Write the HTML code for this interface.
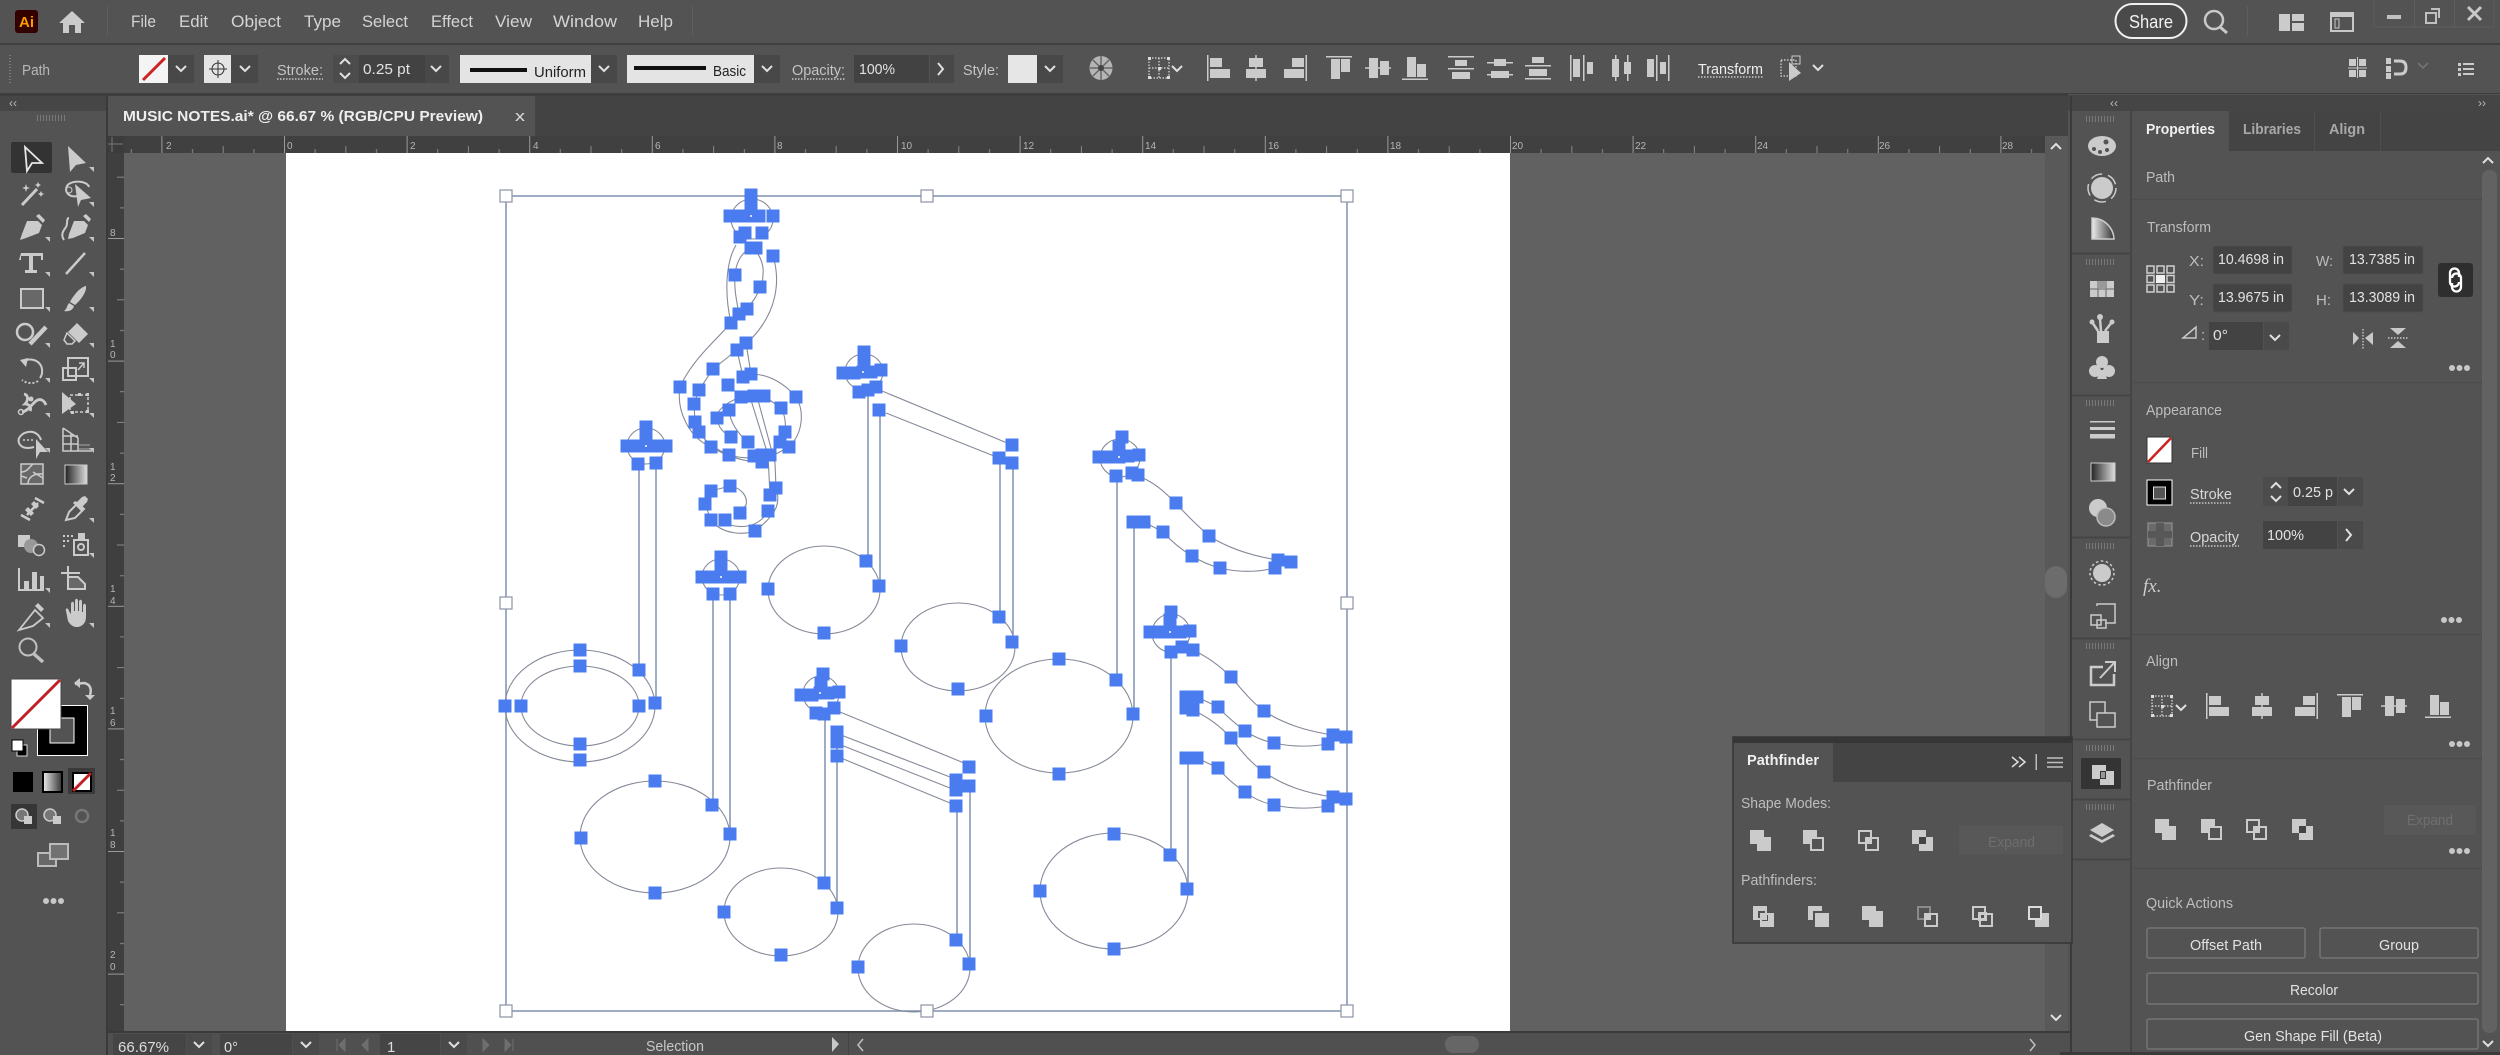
<!DOCTYPE html>
<html><head><meta charset="utf-8"><title>Illustrator</title>
<style>
html,body{margin:0;padding:0;background:#535353;width:2500px;height:1055px;overflow:hidden}
svg{display:block}
text{font-family:"Liberation Sans",sans-serif;fill:#d0d0d0}
.m{font-size:17px;fill:#d4d4d4}
.o{font-size:15px;fill:#c4c4c4}
.v{font-size:15px;fill:#e2e2e2}
.h{font-size:15px;fill:#bdbdbd}
.r{font-size:10px;fill:#b5b5b5}
.b{font-weight:bold}
.ln{fill:none;stroke:#7f90b0;stroke-width:1.5}
.lt{fill:none;stroke:#858a99;stroke-width:1.1}
.hd{fill:none;stroke:#4a7cf0;stroke-width:13;stroke-linecap:square}
.ic{fill:#cbcbcb}
.st{fill:none;stroke:#cbcbcb;stroke-width:2}
.chev{fill:none;stroke:#e0e0e0;stroke-width:2}
.dot{fill:none;stroke:#ddd;stroke-width:1.2;stroke-dasharray:1.5 1.5}
</style></head><body>
<svg xmlns="http://www.w3.org/2000/svg" width="2500" height="1055" viewBox="0 0 2500 1055">
<defs>
<linearGradient id="gr" x1="0" x2="1" y1="0" y2="0"><stop offset="0" stop-color="#222"/><stop offset="1" stop-color="#ddd"/></linearGradient>
<linearGradient id="gr2" x1="0" x2="1" y1="0" y2="0"><stop offset="0" stop-color="#eee"/><stop offset="1" stop-color="#333"/></linearGradient>
<pattern id="rh" width="122.6" height="17" patternUnits="userSpaceOnUse" patternTransform="translate(284 136)">
<rect x="0" y="0" width="1" height="17" fill="#999"/><rect x="30.6" y="13" width="1" height="4" fill="#888"/><rect x="61.3" y="10" width="1" height="7" fill="#888"/><rect x="92" y="13" width="1" height="4" fill="#888"/></pattern>
<pattern id="rv" width="17" height="122.6" patternUnits="userSpaceOnUse" patternTransform="translate(107 238)">
<rect x="0" y="0" width="17" height="1" fill="#999"/><rect x="13" y="30.6" width="4" height="1" fill="#888"/><rect x="10" y="61.3" width="7" height="1" fill="#888"/><rect x="13" y="92" width="4" height="1" fill="#888"/></pattern>
<path id="ch" class="chev" d="M-5 -3L0 2L5 -3"/>
<path id="chu" class="chev" d="M-5 2L0 -3L5 2"/>
<path id="tri" fill="#c4c4c4" d="M0 0V-5H-5z"/>
<g id="a1" class="ic"><rect x="-11" y="-13" width="1.5" height="26"/><rect x="-8" y="-10" width="12" height="9"/><rect x="-8" y="1" width="20" height="9"/></g>
<g id="a2" class="ic"><rect x="-.75" y="-13" width="1.5" height="26"/><rect x="-7" y="-10" width="14" height="9"/><rect x="-10" y="1" width="20" height="9"/></g>
<g id="a4" class="ic"><rect x="-13" y="-12" width="26" height="1.5"/><rect x="-8" y="-9" width="9" height="20"/><rect x="2" y="-9" width="9" height="13"/></g>
<g id="a5" class="ic"><rect x="-13" y="-.75" width="26" height="1.5"/><rect x="-9" y="-10" width="9" height="20"/><rect x="2" y="-7" width="9" height="14"/></g>
<g id="a7" class="ic"><rect x="-13" y="-12" width="26" height="1.5"/><rect x="-6" y="-8" width="12" height="6"/><rect x="-13" y="0" width="26" height="1.5"/><rect x="-9" y="4" width="18" height="7"/></g>
<g id="a8" class="ic"><rect x="-6" y="-9" width="12" height="7"/><rect x="-13" y="-6" width="26" height="1.5"/><rect x="-9" y="3" width="18" height="7"/><rect x="-13" y="6" width="26" height="1.5"/></g>
<g id="a9" class="ic"><rect x="-6" y="-11" width="12" height="6"/><rect x="-13" y="-3" width="26" height="1.5"/><rect x="-9" y="1" width="18" height="7"/><rect x="-13" y="10" width="26" height="1.5"/></g>
<g id="a10" class="ic"><rect x="-12" y="-13" width="1.5" height="26"/><rect x="-9" y="-9" width="7" height="18"/><rect x="1" y="-13" width="1.5" height="26"/><rect x="5" y="-6" width="6" height="12"/></g>
<g id="a11" class="ic"><rect x="-9" y="-9" width="7" height="18"/><rect x="-6" y="-13" width="1.5" height="26"/><rect x="3" y="-6" width="7" height="12"/><rect x="6" y="-13" width="1.5" height="26"/></g>
<g id="a12" class="ic"><rect x="-9" y="-9" width="7" height="18"/><rect x="0" y="-13" width="1.5" height="26"/><rect x="4" y="-6" width="6" height="12"/><rect x="12" y="-13" width="1.5" height="26"/></g>
<g id="p1" class="ic"><path d="M0 0h14v7h7v14h-14v-7h-7z"/></g>
<g id="p2"><rect class="ic" width="14" height="14"/><rect x="8" y="8" width="12" height="12" fill="#535353" stroke="#cbcbcb" stroke-width="2"/></g>
<g id="p3"><rect class="ic" x="7" y="7" width="7" height="7"/><rect class="st" x="1" y="1" width="12" height="12"/><rect class="st" x="8" y="8" width="12" height="12"/></g>
<g id="p4"><path class="ic" d="M0 0h14v7h7v14h-14v-7h-7z"/><rect x="7" y="7" width="7" height="7" fill="#444"/></g>
<g id="p5"><rect class="st" x="1" y="1" width="12" height="12"/><rect class="ic" x="0" y="0" width="14" height="5"/><rect class="ic" x="0" y="0" width="5" height="14"/><rect class="ic" x="7" y="7" width="7" height="7"/><rect class="st" x="8" y="8" width="12" height="12"/><rect class="ic" x="15" y="7" width="6" height="14"/><rect class="ic" x="7" y="15" width="14" height="6"/></g>
<g id="p6"><path class="ic" d="M0 0h14v5h-9v9h-5z"/><rect class="ic" x="7" y="7" width="14" height="14"/></g>
<g id="p7"><path class="ic" d="M0 0h14v5h7v16h-14v-7h-7z"/></g>
<g id="p8"><rect fill="none" stroke="#8a8a8a" stroke-width="2" x="1" y="1" width="12" height="12"/><rect class="st" x="8" y="8" width="12" height="12"/><rect class="ic" x="7" y="7" width="7" height="7"/></g>
<g id="p9"><rect class="st" x="1" y="1" width="12" height="12"/><rect class="st" x="8" y="8" width="12" height="12"/><rect class="st" x="7" y="7" width="7" height="7"/></g>
<g id="p10"><path class="ic" d="M14 7h7v14h-14v-7h7z"/><rect fill="none" stroke="#dcdcdc" stroke-width="2" x="1" y="1" width="12" height="12"/></g>
<g id="dots" fill="#c8c8c8"><circle cx="0" cy="0" r="3"/><circle cx="7.5" cy="0" r="3"/><circle cx="15" cy="0" r="3"/></g>
<g id="grip" fill="#7a7a7a"><rect x="0" y="0" width="1" height="6"/><rect x="3" y="0" width="1" height="6"/><rect x="6" y="0" width="1" height="6"/><rect x="9" y="0" width="1" height="6"/><rect x="12" y="0" width="1" height="6"/><rect x="15" y="0" width="1" height="6"/><rect x="18" y="0" width="1" height="6"/><rect x="21" y="0" width="1" height="6"/><rect x="24" y="0" width="1" height="6"/><rect x="27" y="0" width="1" height="6"/></g>
<g id="none"><rect width="25" height="26" fill="#fff" stroke="#333"/><path d="M1 25L24 1" stroke="#c22" stroke-width="2.5"/></g>
<g id="dash"><rect class="dot" x="0" y="0" width="20" height="20"/><path d="M10 0v20M0 10h20" class="dot"/><g fill="#ddd"><rect x="-1" y="-1" width="3" height="3"/><rect x="18" y="-1" width="3" height="3"/><rect x="-1" y="18" width="3" height="3"/><rect x="18" y="18" width="3" height="3"/><rect x="9" y="9" width="3" height="3"/></g></g>
</defs>

<!-- base -->
<rect width="2500" height="1055" fill="#535353"/>
<!-- canvas -->
<rect x="107" y="94" width="1965" height="940" fill="#616161"/>
<rect x="0" y="43" width="2500" height="2" fill="#3f3f3f"/>
<rect x="0" y="93" width="2500" height="3" fill="#3d3d3d"/>

<!-- tabs row -->
<rect x="107" y="96" width="1965" height="40" fill="#434343"/>
<rect x="108" y="96" width="427" height="40" fill="#535353"/>
<text class="b" x="123" y="121" font-size="15" textLength="360" lengthAdjust="spacingAndGlyphs" style="fill:#eee">MUSIC NOTES.ai* @ 66.67 % (RGB/CPU Preview)</text>
<text x="515" y="121" font-size="15" textLength="10" lengthAdjust="spacingAndGlyphs" style="fill:#ddd">x</text>

<!-- rulers -->
<rect x="107" y="136" width="1938" height="17" fill="#404040"/>
<rect x="107" y="136" width="1938" height="17" fill="url(#rh)"/>
<rect x="107" y="153" width="17" height="878" fill="#3f3f3f"/>
<rect x="107" y="153" width="17" height="878" fill="url(#rv)"/>
<rect x="107" y="136" width="17" height="17" fill="#3c3c3c"/>
<path d="M112 137v15M108 144h15" stroke="#777" fill="none"/>
<g class="r">
<text class="r" x="166" y="149">2</text><text class="r" x="287" y="149">0</text><text class="r" x="410" y="149">2</text><text class="r" x="533" y="149">4</text><text class="r" x="655" y="149">6</text><text class="r" x="777" y="149">8</text><text class="r" x="901" y="149">10</text><text class="r" x="1023" y="149">12</text><text class="r" x="1145" y="149">14</text><text class="r" x="1268" y="149">16</text><text class="r" x="1390" y="149">18</text><text class="r" x="1512" y="149">20</text><text class="r" x="1635" y="149">22</text><text class="r" x="1757" y="149">24</text><text class="r" x="1879" y="149">26</text><text class="r" x="2002" y="149">28</text>
<text class="r" x="110" y="236">8</text>
<text class="r" x="110" y="347">1</text><text class="r" x="110" y="358">0</text>
<text class="r" x="110" y="470">1</text><text class="r" x="110" y="481">2</text>
<text class="r" x="110" y="592">1</text><text class="r" x="110" y="604">4</text>
<text class="r" x="110" y="714">1</text><text class="r" x="110" y="726">6</text>
<text class="r" x="110" y="836">1</text><text class="r" x="110" y="848">8</text>
<text class="r" x="110" y="958">2</text><text class="r" x="110" y="970">0</text>
</g>

<!-- artboard -->
<rect x="286" y="153" width="1224" height="878" fill="#fff"/>

<!-- ARTWORK: bounding box lines -->
<rect class="ln" x="506" y="196" width="841" height="815"/>
<!-- curves -->
<g class="lt">
<!-- clef -->
<ellipse cx="752" cy="219" rx="21" ry="20"/>
<path d="M736 245C726 262 724 292 731 323C716 340 692 360 680 387C676 412 690 438 711 447C728 457 745 462 762 462"/>
<path d="M773 256C781 282 776 312 753 337L746 343"/>
<path d="M751 248C742 252 736 262 735 275C734 288 736 298 739 314M751 248C760 252 764 266 763 274C763 280 762 284 760 287C757 297 752 302 747 309"/>
<path d="M737 350L713 369L699 390L694 404L695 422L699 432C708 445 718 450 729 455C738 458 748 458 754 458"/>
<path d="M751 374C770 374 786 385 796 397C804 410 804 432 789 447L772 456"/>
<path d="M741 397C724 403 716 412 717 418C718 428 724 433 731 437M729 410C730 422 738 434 748 442M764 396L781 408C785 415 786 424 785 432"/>
<path d="M746 343L751 374M737 350L743 377M751 400L768 455L770 495M758 400L775 463L776 488"/>
<path d="M776 488C780 500 780 512 755 531C745 535 722 535 711 520M768 511C762 522 750 530 730 525L725 520M730 486C742 488 748 497 746 505L740 513M711 491L730 486M711 491L705 504L711 520"/>
<!-- note A -->
<ellipse cx="646" cy="446" rx="19" ry="18"/>
<ellipse cx="580" cy="706" rx="75" ry="56"/><ellipse cx="580" cy="706" rx="59" ry="40"/>
<!-- note B -->
<ellipse cx="721" cy="577" rx="19" ry="18"/>
<ellipse cx="655" cy="837" rx="75" ry="56"/>
<!-- note C -->
<ellipse cx="864" cy="372" rx="19" ry="18"/>
<ellipse cx="824" cy="590" rx="56" ry="44"/>
<ellipse cx="958" cy="647" rx="57" ry="44"/>
<path d="M882 391L1012 445M886 413L999 458"/>
<!-- note D -->
<ellipse cx="1120" cy="458" rx="20" ry="19"/>
<path d="M1143 478C1158 485 1166 494 1176 503C1186 515 1198 526 1209 536C1228 548 1252 556 1278 560M1144 522L1163 532C1172 542 1182 550 1192 556C1202 562 1212 566 1220 568C1240 573 1258 572 1275 568"/>
<ellipse cx="1059" cy="716" rx="74" ry="57"/>
<!-- note E -->
<ellipse cx="1171" cy="633" rx="19" ry="19"/>
<path d="M1193 650C1210 658 1222 668 1231 677C1242 690 1252 702 1264 711C1284 724 1306 731 1333 735M1197 697L1218 707C1226 716 1236 724 1245 731C1254 737 1264 741 1274 743C1292 747 1310 747 1328 744"/>
<path d="M1193 710C1210 718 1222 728 1231 738C1242 752 1252 764 1264 772C1284 786 1306 793 1333 797M1197 758L1218 768C1226 778 1236 786 1245 792C1254 799 1264 803 1274 805C1292 809 1310 809 1328 806"/>
<ellipse cx="1114" cy="891" rx="74" ry="58"/>
<!-- note F -->
<ellipse cx="821" cy="694" rx="18" ry="18"/>
<path d="M840 712L964 763M841 735L950 777M841 745L950 788M841 758L950 803"/>
<ellipse cx="781" cy="912" rx="57" ry="44"/>
<ellipse cx="914" cy="968" rx="56" ry="44"/>
</g>
<!-- stems -->
<path class="ln" d="M639 464V670M656 463V703M713 594V805M730 594V834M868 392V561M880 410V586M1000 458V617M1013 460V642M1117 476V680M1134 522V714M1171 652V855M1188 758V889M825 712V883M837 726V908M957 806V940M970 786V964"/>

<!-- anchor points -->
<path class="hd" d="M751 195h0M751 204h0M751 216h0M730 216h0M743 216h0M759 216h0M773 216h0M762 233h0M745 233h0M740 237h0M751 248h0M756 248h0M773 256h0M735 275h0M760 287h0M747 309h0M739 314h0M731 323h0M746 343h0M737 350h0M713 369h0M680 387h0M699 390h0M728 385h0M743 377h0M751 374h0M796 397h0M741 397h0M754 396h0M764 396h0M781 408h0M694 404h0M729 410h0M717 418h0M695 422h0M699 432h0M731 437h0M748 442h0M785 432h0M780 442h0M789 447h0M711 447h0M729 455h0M754 456h0M762 455h0M770 455h0M762 462h0M776 488h0M770 495h0M768 511h0M711 491h0M730 486h0M705 504h0M740 513h0M711 520h0M725 520h0M755 531h0"/>
<path class="hd" d="M646 427h0M646 437h0M646 446h0M627 446h0M637 446h0M655 446h0M666 446h0M638 464h0M656 463h0M580 650h0M580 666h0M580 744h0M580 760h0M505 706h0M521 706h0M639 706h0M655 703h0M639 670h0"/>
<path class="hd" d="M721 557h0M721 567h0M721 577h0M702 577h0M711 577h0M729 577h0M740 577h0M713 594h0M730 594h0M655 781h0M655 893h0M581 838h0M712 805h0M730 834h0"/>
<path class="hd" d="M864 352h0M864 362h0M863 372h0M843 373h0M854 373h0M871 372h0M881 370h0M859 392h0M868 390h0M876 387h0M879 410h0M866 561h0M879 586h0M768 589h0M824 633h0M1012 445h0M999 458h0M1012 463h0M999 617h0M1012 642h0M901 646h0M958 689h0"/>
<path class="hd" d="M1122 437h0M1119 447h0M1119 457h0M1099 457h0M1110 457h0M1128 456h0M1139 455h0M1116 476h0M1132 473h0M1138 475h0M1176 503h0M1209 536h0M1278 560h0M1291 562h0M1275 568h0M1133 522h0M1144 522h0M1163 532h0M1192 556h0M1220 568h0M1059 659h0M1116 680h0M986 716h0M1133 714h0M1059 774h0"/>
<path class="hd" d="M1171 612h0M1170 620h0M1170 632h0M1150 632h0M1160 632h0M1180 632h0M1190 631h0M1171 652h0M1182 647h0M1193 650h0M1231 677h0M1264 711h0M1333 735h0M1346 737h0M1328 744h0M1186 697h0M1197 697h0M1186 708h0M1193 710h0M1218 707h0M1245 731h0M1274 743h0M1231 738h0M1264 772h0M1333 797h0M1346 799h0M1328 806h0M1186 758h0M1197 758h0M1218 768h0M1245 792h0M1274 805h0M1114 834h0M1170 855h0M1040 891h0M1187 889h0M1114 949h0"/>
<path class="hd" d="M823 674h0M821 683h0M820 693h0M801 695h0M812 695h0M828 693h0M839 692h0M816 713h0M824 714h0M834 708h0M837 732h0M837 742h0M837 756h0M969 767h0M956 780h0M956 790h0M969 786h0M956 806h0M824 883h0M837 908h0M724 912h0M781 955h0M956 940h0M969 964h0M858 967h0"/>
<circle cx="751" cy="216" r="1" fill="#fff"/><circle cx="646" cy="446" r="1" fill="#fff"/><circle cx="721" cy="577" r="1" fill="#fff"/><circle cx="863" cy="372" r="1" fill="#fff"/><circle cx="1119" cy="457" r="1" fill="#fff"/><circle cx="1170" cy="632" r="1" fill="#fff"/><circle cx="820" cy="693" r="1" fill="#fff"/>
<!-- bbox handles -->
<g fill="#fff" stroke="#8a93a5" stroke-width="1.2">
<rect x="500" y="190" width="12" height="12"/><rect x="921" y="190" width="12" height="12"/><rect x="1341" y="190" width="12" height="12"/>
<rect x="500" y="597" width="12" height="12"/><rect x="1341" y="597" width="12" height="12"/>
<rect x="500" y="1005" width="12" height="12"/><rect x="921" y="1005" width="12" height="12"/><rect x="1341" y="1005" width="12" height="12"/>
</g>

<!-- canvas scrollbar right -->
<rect x="2045" y="136" width="27" height="896" fill="#595959"/>
<rect x="2045" y="566" width="22" height="32" rx="11" fill="#6c6c6c"/>
<use href="#chu" x="2056" y="147"/><use href="#ch" x="2056" y="1018"/>

<!-- MENU BAR -->
<rect x="15" y="10" width="23" height="23" rx="3" fill="#330000"/>
<text x="19" y="27" font-size="15" class="b" style="fill:#ff9a00">Ai</text>
<path class="ic" d="M72 11L85 23H81V33H75V25H69V33H63V23H59z"/>
<rect x="107" y="6" width="1" height="30" fill="#5e5e5e"/><rect x="692" y="6" width="1" height="30" fill="#5e5e5e"/>
<text class="m" x="131" y="27" textLength="25" lengthAdjust="spacingAndGlyphs">File</text>
<text class="m" x="179" y="27" textLength="29" lengthAdjust="spacingAndGlyphs">Edit</text>
<text class="m" x="231" y="27" textLength="50" lengthAdjust="spacingAndGlyphs">Object</text>
<text class="m" x="304" y="27" textLength="37" lengthAdjust="spacingAndGlyphs">Type</text>
<text class="m" x="362" y="27" textLength="46" lengthAdjust="spacingAndGlyphs">Select</text>
<text class="m" x="431" y="27" textLength="42" lengthAdjust="spacingAndGlyphs">Effect</text>
<text class="m" x="495" y="27" textLength="37" lengthAdjust="spacingAndGlyphs">View</text>
<text class="m" x="553" y="27" textLength="64" lengthAdjust="spacingAndGlyphs">Window</text>
<text class="m" x="638" y="27" textLength="35" lengthAdjust="spacingAndGlyphs">Help</text>
<rect x="2115.5" y="4" width="71" height="34" rx="17" fill="#4a4a4a" stroke="#f0f0f0" stroke-width="2"/>
<text x="2129" y="28" font-size="18" textLength="44" lengthAdjust="spacingAndGlyphs" style="fill:#f2f2f2">Share</text>
<circle cx="2214" cy="20" r="9" fill="none" stroke="#c8c8c8" stroke-width="2.5"/><path d="M2220 27L2227 33" stroke="#c8c8c8" stroke-width="3"/>
<rect x="2247" y="6" width="1" height="30" fill="#5e5e5e"/>
<path class="ic" d="M2279 14h11v17h-11zM2292 14h12v7h-12zM2292 23h12v8h-12z"/>
<rect x="2331" y="13" width="22" height="18" fill="none" stroke="#c8c8c8" stroke-width="2"/><rect x="2331" y="13" width="22" height="4" fill="#c8c8c8"/><rect x="2335" y="19" width="4" height="9" fill="none" stroke="#c8c8c8"/>
<rect x="2374" y="-1" width="120" height="28" fill="none" stroke="#5e5e5e"/><rect x="2414" y="0" width="1" height="27" fill="#5e5e5e"/><rect x="2454" y="0" width="1" height="27" fill="#5e5e5e"/>
<rect x="2387" y="15" width="14" height="4" fill="#c0c0c0"/>
<rect x="2426" y="13" width="10" height="10" fill="none" stroke="#c0c0c0" stroke-width="2"/><path d="M2431 9h8v9" fill="none" stroke="#c0c0c0" stroke-width="2"/>
<path d="M2468 7L2481 20M2481 7L2468 20" stroke="#c8c8c8" stroke-width="3"/>

<!-- OPTIONS BAR -->
<path d="M10 55v30" stroke="#7a7a7a" stroke-width="2" stroke-dasharray="1 2"/>
<text class="o" x="22" y="75" textLength="28" lengthAdjust="spacingAndGlyphs" style="fill:#b8b8b8">Path</text>
<rect x="139" y="55" width="29" height="28" fill="#f4f4f4"/><path d="M143 80L165 58" stroke="#c22" stroke-width="3"/>
<rect x="168" y="55" width="26" height="28" fill="#484848"/><use href="#ch" x="181" y="69"/>
<rect x="204" y="55" width="27" height="28" fill="#e4e4e4"/><circle cx="218" cy="69" r="6" fill="none" stroke="#333"/><path d="M218 60v18M209 69h18" stroke="#333"/>
<rect x="231" y="55" width="27" height="28" fill="#484848"/><use href="#ch" x="245" y="69"/>
<text class="o" x="277" y="75" textLength="46" lengthAdjust="spacingAndGlyphs">Stroke:</text>
<path d="M277 79h46" class="dot"/>
<rect x="333" y="55" width="26" height="28" fill="#4c4c4c"/><use href="#chu" x="345" y="62"/><use href="#ch" x="345" y="76"/>
<rect x="359" y="55" width="66" height="28" fill="#424242"/><rect x="425" y="55" width="24" height="28" fill="#484848"/>
<text class="v" x="363" y="74" textLength="47" lengthAdjust="spacingAndGlyphs">0.25 pt</text><use href="#ch" x="436" y="69"/>
<rect x="460" y="55" width="131" height="28" fill="#e4e4e4"/><rect x="470" y="68" width="57" height="4" fill="#111"/>
<text x="534" y="77" font-size="15" textLength="52" lengthAdjust="spacingAndGlyphs" style="fill:#222">Uniform</text>
<rect x="591" y="55" width="26" height="28" fill="#484848"/><use href="#ch" x="604" y="69"/>
<rect x="627" y="55" width="127" height="28" fill="#e4e4e4"/><rect x="634" y="66" width="72" height="4" fill="#111"/>
<text x="713" y="76" font-size="15" textLength="33" lengthAdjust="spacingAndGlyphs" style="fill:#222">Basic</text>
<rect x="754" y="55" width="26" height="28" fill="#484848"/><use href="#ch" x="767" y="69"/>
<text class="o" x="792" y="75" textLength="53" lengthAdjust="spacingAndGlyphs">Opacity:</text><path d="M792 79h53" class="dot"/>
<rect x="854" y="55" width="75" height="28" fill="#424242"/><text class="v" x="859" y="74" textLength="36" lengthAdjust="spacingAndGlyphs">100%</text>
<rect x="930" y="55" width="24" height="28" fill="#484848"/><path class="chev" d="M938 63L943 69L938 75"/>
<text class="o" x="963" y="75" textLength="36" lengthAdjust="spacingAndGlyphs">Style:</text>
<rect x="1008" y="55" width="29" height="28" fill="#e6e6e6"/><rect x="1037" y="55" width="26" height="28" fill="#484848"/><use href="#ch" x="1050" y="69"/>
<ellipse cx="1101" cy="68" rx="11.5" ry="12" fill="#b5b5b5"/><path d="M1101 56v24M1090 68h23M1093 60l16 16M1109 60l-16 16" stroke="#666" stroke-width="1.5"/><circle cx="1101" cy="68" r="3" fill="#444"/>
<use href="#dash" x="1149" y="58"/><use href="#ch" x="1177" y="69"/>
<use href="#a1" x="1218" y="68"/><use href="#a2" x="1256" y="68"/><use href="#a1" transform="translate(1296 68) scale(-1 1)"/>
<use href="#a4" x="1339" y="68"/><use href="#a5" x="1378" y="68"/><use href="#a4" transform="translate(1415 68) scale(1 -1)"/>
<use href="#a7" x="1461" y="68"/><use href="#a8" x="1500" y="68"/><use href="#a9" x="1538" y="68"/>
<use href="#a10" x="1582" y="68"/><use href="#a11" x="1621" y="68"/><use href="#a12" x="1656" y="68"/>
<text x="1698" y="74" font-size="15" textLength="65" lengthAdjust="spacingAndGlyphs" style="fill:#eee">Transform</text><path d="M1698 77h65" class="dot"/>
<rect x="1781" y="60" width="15" height="16" class="dot"/><path class="ic" d="M1789 62L1801 73L1789 81z"/><rect x="1792" y="56" width="8" height="8" fill="none" stroke="#ccc"/>
<use href="#ch" x="1818" y="68"/>
<g class="ic"><rect x="2349" y="59" width="7" height="7"/><rect x="2359" y="59" width="7" height="7"/><rect x="2349" y="70" width="7" height="7"/><rect x="2359" y="70" width="7" height="7"/><rect x="2348" y="67.5" width="19" height="1"/><rect x="2357" y="57" width="1" height="21"/></g>
<g class="ic"><rect x="2386" y="58" width="5" height="6"/><rect x="2386" y="66" width="5" height="6"/><rect x="2386" y="73" width="5" height="6"/></g><path d="M2394 61h6q6 0 6 6.500t-6 6.500h-6" fill="none" stroke="#ccc" stroke-width="3"/>
<path d="M2418 63L2423 68L2428 63" fill="none" stroke="#777" stroke-width="1.5"/>
<g class="ic"><rect x="2458" y="63" width="3" height="3"/><rect x="2463" y="63" width="11" height="2"/><rect x="2458" y="68" width="3" height="3"/><rect x="2463" y="68" width="11" height="2"/><rect x="2458" y="73" width="3" height="3"/><rect x="2463" y="73" width="11" height="2"/></g>

<!-- LEFT TOOLBAR -->
<rect x="0" y="96" width="107" height="959" fill="#535353"/>
<rect x="0" y="96" width="107" height="15" fill="#464646"/>
<rect x="106" y="96" width="2" height="959" fill="#3a3a3a"/>
<text x="9" y="107" font-size="12" style="fill:#bbb">‹‹</text>
<use href="#grip" x="37" y="115"/>
<rect x="11" y="142" width="41" height="31" rx="2" fill="#333"/>
<path d="M25 147L42 163L32 163L27 171z" fill="none" stroke="#e8e8e8" stroke-width="1.8"/>
<path class="ic" d="M68 146L86 163L76 165L70 172z"/>
<!-- r2 -->
<path d="M22 205L37 189" stroke="#cbcbcb" stroke-width="3"/><path class="ic" d="M26 184l1 3 3 1-3 1-1 3-1-3-3-1 3-1zM38 182l1 2 2 1-2 1-1 2-1-2-2-1 2-1zM41 191l1 2 2 1-2 1-1 2-1-2-2-1 2-1z"/>
<path d="M78 196c-9 2-14-4-11-10s20-6 22 1" class="st"/><path class="ic" d="M75 184L91 198L81 200L78 207z"/><circle cx="69" cy="190" r="3" fill="none" stroke="#ccc"/>
<!-- r3 -->
<path class="ic" d="M38 221l4 4-3 8-13 5-6 2 2-6 5-13z"/><path class="ic" d="M36 216l7 7 2-3-6-6z"/>
<path class="ic" d="M84 221l4 4-3 8-12 5-5 1 1-5 5-13z"/><path class="ic" d="M83 216l6 6 2-3-5-5z"/><path d="M64 240c-4-6 0-10 2-13s0-9 3-9" class="st"/>
<!-- r4 -->
<path class="ic" d="M21 253h22v7h-2v-4h-8v14h4v3h-12v-3h4v-14h-8v4h-2z"/>
<path d="M66 274L85 253" class="st" style="stroke-width:2.5"/>
<!-- r5 -->
<rect x="21" y="289" width="22" height="19" fill="#686868" stroke="#cbcbcb" stroke-width="2"/>
<path class="ic" d="M86 286c1 6-6 15-11 19l-5-3c3-6 10-15 16-16zM69 303l5 3c-1 4-5 6-10 5 3-2 3-6 5-8z"/>
<!-- r6 -->
<circle cx="25" cy="332" r="8" fill="none" stroke="#cbcbcb" stroke-width="2.5"/><path d="M30 344L46 327" stroke="#cbcbcb" stroke-width="4.500"/>
<path class="ic" d="M77 323l11 11-9 9-4-4-7-7z"/><path d="M67 333l8 8-3 3h-5l-3-4z" fill="none" stroke="#ccc" stroke-width="1.5"/>
<!-- r7 -->
<path d="M23 362c4-4 12-3 16 1s4 11 1 15" class="st"/><path class="ic" d="M20 360l8-2-2 9z"/><path d="M38 381c-4 3-11 3-16-1" class="st" stroke-dasharray="2 2"/>
<rect x="68" y="358" width="20" height="18" class="st"/><rect x="63" y="368" width="13" height="12" class="st"/><path d="M78 370l6-7M79 363h5v5" fill="none" stroke="#ccc" stroke-width="1.5"/>
<!-- r8 -->
<path d="M24 394c5 1 4 7 1 10 4 0 7 3 5 7M22 412c6-1 10-8 14-11s8-1 10 4" class="st" style="stroke-width:2.800"/><circle cx="21" cy="412" r="2.500" class="st" style="stroke-width:1.500"/><circle cx="31" cy="399" r="2.500" class="ic"/>
<path class="ic" d="M62 392L76 404L62 414z"/><rect x="70" y="395" width="18" height="17" fill="none" stroke="#ccc" stroke-width="1.5" stroke-dasharray="3 2"/><g class="ic"><rect x="86" y="393" width="3" height="3"/><rect x="86" y="410" width="3" height="3"/><rect x="71" y="411" width="3" height="3"/><rect x="78" y="393" width="3" height="3"/></g>
<!-- r9 -->
<path d="M34 447c-7 2-13 1-15-4s3-10 9-11 11 2 13 8" class="st"/><path class="ic" d="M36 439L48 452L40 452L36 459z"/><g class="ic"><circle cx="24" cy="440" r="1"/><circle cx="28" cy="440" r="1"/><circle cx="32" cy="440" r="1"/></g>
<path d="M63 428V451H92M63 428L78 438V451M63 436H78M63 444H78M71 433V451" class="st" style="stroke-width:1.500"/><path d="M78 445H90M78 449H92" stroke="#aaa"/>
<!-- r10 -->
<rect x="21" y="464" width="22" height="20" fill="#686868" stroke="#cbcbcb" stroke-width="1.500"/><path d="M21 472c7 0 9-6 12-8M28 484c0-6 5-11 15-10M33 472l10 6M27 478l-6-2" stroke="#ccc" stroke-width="1.500" fill="none"/>
<rect x="65" y="465" width="22" height="19" fill="url(#gr)" stroke="#ccc"/>
<!-- r11 -->
<path d="M21 515L30 520M35 498L44 503M27 515L38 503" stroke="#cbcbcb" stroke-width="2.500"/><path class="ic" d="M28 507l6 6-3 3-6-6zM34 501l5 5-3 3-5-5z"/>
<path d="M66 520l3-8 9-9 6 6-9 9z" class="st"/><path class="ic" d="M77 502l5-5 3-1 3 3-1 3-5 5 1 2-2 2-8-8 2-2z"/>
<!-- r12 -->
<rect x="18" y="535" width="12" height="12" class="ic"/><circle cx="31" cy="546" r="7" fill="#999"/><circle cx="39" cy="550" r="5.500" fill="#555" stroke="#ccc" stroke-width="1.500"/>
<g class="ic"><rect x="63" y="535" width="2" height="2"/><rect x="67" y="535" width="2" height="2"/><rect x="71" y="535" width="2" height="2"/><rect x="63" y="540" width="2" height="2"/><rect x="67" y="540" width="2" height="2"/><rect x="63" y="545" width="2" height="2"/></g><rect x="74" y="540" width="14" height="15" class="st"/><circle cx="81" cy="547" r="3" class="st"/><rect x="78" y="533" width="7" height="6" class="ic"/>
<!-- r13 -->
<path d="M19 568V590H44" class="st"/><g class="ic"><rect x="24" y="581" width="5" height="9"/><rect x="32" y="572" width="5" height="18"/><rect x="40" y="576" width="4" height="14"/></g>
<path d="M68 566V577M61 573H80" class="st"/><path d="M68 577H78L85 584V589H68z" fill="#686868" stroke="#ccc" stroke-width="2"/>
<!-- r14 -->
<path d="M19 630L35 610l8 8-10 8z" class="st" style="stroke-width:1.800"/><path class="ic" d="M38 603l6 6-3 3-6-6z"/>
<path class="ic" d="M66 611c-1-3 2-4 3 0l2 3v-10c0-3 3-3 3 0v7h1v-10c0-3 3-3 3 0v10h1v-9c0-3 3-3 3 0v10h1v-6c0-3 3-3 3 0v11c0 6-4 10-9 10s-7-3-9-6z"/>
<!-- zoom -->
<circle cx="28" cy="647" r="8.500" fill="none" stroke="#c0c0c0" stroke-width="2"/><path d="M34 654L43 662" stroke="#c0c0c0" stroke-width="3.500"/>
<!-- triangles -->
<use href="#tri" x="94" y="172"/><use href="#tri" x="94" y="207"/><use href="#tri" x="50" y="242"/><use href="#tri" x="94" y="242"/><use href="#tri" x="50" y="277"/><use href="#tri" x="94" y="277"/><use href="#tri" x="50" y="312"/><use href="#tri" x="94" y="312"/><use href="#tri" x="50" y="348"/><use href="#tri" x="94" y="348"/><use href="#tri" x="50" y="383"/><use href="#tri" x="94" y="383"/><use href="#tri" x="50" y="418"/><use href="#tri" x="94" y="418"/><use href="#tri" x="50" y="453"/><use href="#tri" x="94" y="453"/><use href="#tri" x="94" y="523"/><use href="#tri" x="94" y="558"/><use href="#tri" x="50" y="593"/><use href="#tri" x="50" y="628"/><use href="#tri" x="94" y="628"/>
<!-- fill/stroke -->
<rect x="37.500" y="705.500" width="50" height="50" fill="#000" stroke="#fff"/><rect x="50" y="718" width="24" height="25" fill="#535353" stroke="#fff"/>
<rect x="11" y="679" width="50" height="50" fill="#fff" stroke="#444"/><path d="M12 728L60 680" stroke="#c22025" stroke-width="3"/>
<path d="M75 684l9-1c6 1 8 6 6 12" fill="none" stroke="#ccc" stroke-width="2.500"/><path class="ic" d="M80 678l-6 5 6 5zM85 695l5 5 5-5z"/>
<rect x="17" y="745" width="10" height="11" fill="#000" stroke="#ddd"/><rect x="12" y="740" width="11" height="11" fill="#fff" stroke="#000"/>
<rect x="68" y="768" width="27" height="26" fill="#3a3a3a"/>
<rect x="13" y="772" width="20" height="20" fill="#000"/>
<rect x="43" y="772" width="19" height="20" fill="url(#gr2)" stroke="#000" stroke-width="2"/>
<rect x="73" y="773" width="18" height="18" fill="#fff" stroke="#000" stroke-width="2"/><path d="M73 791L91 773" stroke="#c22025" stroke-width="3"/>
<rect x="11" y="804" width="26" height="25" fill="#363636"/>
<circle cx="22" cy="815" r="6" fill="#777" stroke="#ccc" stroke-width="1.500"/><rect x="24" y="816" width="8" height="8" class="ic"/>
<circle cx="50" cy="815" r="6" fill="#777" stroke="#ccc" stroke-width="1.500"/><rect x="53" y="816" width="8" height="8" class="ic"/>
<circle cx="82" cy="816" r="6" fill="none" stroke="#777" stroke-width="2.500"/>
<rect x="38" y="853" width="18" height="13" fill="#686868" stroke="#bbb" stroke-width="2"/><rect x="50" y="844" width="18" height="15" fill="#727272" stroke="#bbb" stroke-width="2"/>
<use href="#dots" x="46" y="901"/>

<!-- RIGHT PANEL -->
<rect x="2068" y="94" width="432" height="961" fill="#535353"/>
<rect x="2068" y="95" width="432" height="16" fill="#454545"/>
<rect x="2070" y="96" width="2" height="959" fill="#3a3a3a"/>
<rect x="2130" y="111" width="2" height="944" fill="#454545"/>
<text x="2110" y="107" font-size="12" style="fill:#bbb">‹‹</text><text x="2478" y="107" font-size="12" style="fill:#bbb">››</text>
<!-- dock group lines -->
<path d="M2072 253.500h58M2072 395.500h58M2072 537.500h58M2072 638.500h58M2072 739.500h58M2072 799.500h58M2072 859.500h58" stroke="#454545" stroke-width="2"/>
<use href="#grip" x="2086" y="116"/><use href="#grip" x="2086" y="259"/><use href="#grip" x="2086" y="400"/><use href="#grip" x="2086" y="543"/><use href="#grip" x="2086" y="643"/><use href="#grip" x="2086" y="745"/><use href="#grip" x="2086" y="804"/>
<!-- dock icons -->
<ellipse class="ic" cx="2102" cy="146" rx="14" ry="10"/><g fill="#535353"><circle cx="2094" cy="149" r="2"/><circle cx="2100" cy="152" r="2"/><circle cx="2107" cy="150" r="2"/><circle cx="2106" cy="142" r="2.500"/></g>
<circle class="ic" cx="2102" cy="188" r="11"/><circle cx="2102" cy="188" r="14" fill="none" stroke="#cbcbcb" stroke-width="1.500" stroke-dasharray="12 6"/>
<path d="M2092 218V239H2114A22 22 0 0 0 2092 218z" fill="url(#gr2)" stroke="#ccc" stroke-width="1.500"/>
<g><rect x="2090" y="281" width="24" height="16" class="ic"/><path d="M2098 281v16M2106 281v16M2090 289h24" stroke="#666"/><rect x="2098" y="281" width="8" height="8" fill="#999"/></g>
<rect class="ic" x="2097" y="331" width="12" height="12"/><path d="M2101 331L2100 319M2105 331l7-9M2098 331l-6-9" stroke="#cbcbcb" stroke-width="2.500"/><circle class="ic" cx="2100" cy="317" r="3"/><circle class="ic" cx="2112" cy="322" r="2.500"/><circle class="ic" cx="2092" cy="322" r="2.500"/>
<g class="ic"><circle cx="2102" cy="362" r="6"/><circle cx="2095" cy="371" r="6"/><circle cx="2109" cy="371" r="6"/><path d="M2100 370h4l3 9h-10z"/></g>
<g class="ic"><rect x="2090" y="421" width="25" height="1.500"/><rect x="2090" y="427" width="25" height="3"/><rect x="2090" y="434" width="25" height="4.500"/></g>
<rect x="2091" y="463" width="24" height="18" fill="url(#gr)" stroke="#ccc"/>
<circle cx="2098" cy="508" r="9" class="ic"/><circle cx="2106" cy="517" r="9" fill="#8a8a8a" stroke="#bbb" stroke-width="1.500"/>
<circle class="ic" cx="2102" cy="573" r="9"/><circle cx="2102" cy="573" r="12" fill="none" stroke="#ccc" stroke-width="1.500" stroke-dasharray="2.500 2.500"/>
<path d="M2097 606V604H2115V623H2105" class="st" style="stroke-width:1.500"/><rect x="2091" y="615" width="10" height="10" class="st" style="stroke-width:1.500"/><rect x="2097" y="620" width="9" height="8" class="st" style="stroke-width:1.500"/>
<path d="M2103 667H2091V685H2114V674" class="st" style="stroke-width:2.500"/><path d="M2100 678L2114 663M2105 662H2115V672" fill="none" stroke="#ccc" stroke-width="2"/>
<rect x="2090" y="702" width="15" height="18" class="st" style="stroke-width:1.500"/><rect x="2097" y="713" width="18" height="14" fill="#535353" stroke="#ccc" stroke-width="1.500"/>
<rect x="2081" y="758" width="40" height="31" rx="1" fill="#343434"/>
<path class="ic" d="M2092 765h14v6h8v14h-14v-6h-8z"/><rect x="2100" y="771" width="6" height="8" fill="#343434"/><rect x="2101" y="772" width="4" height="6" fill="#999"/>
<path class="ic" d="M2102 823l12 7-12 7-12-7z"/><path d="M2091 834l11 6 11-6 2 2-13 7-13-7z" fill="#cbcbcb"/>

<!-- tabs -->
<rect x="2132" y="111" width="368" height="40" fill="#444"/>
<rect x="2132" y="111" width="97" height="40" fill="#535353"/>
<rect x="2314" y="111" width="1" height="40" fill="#4e4e4e"/><rect x="2380" y="111" width="1" height="40" fill="#4e4e4e"/>
<text class="b" x="2146" y="134" font-size="15" textLength="69" lengthAdjust="spacingAndGlyphs" style="fill:#f0f0f0">Properties</text>
<text class="b" x="2243" y="134" font-size="15" textLength="58" lengthAdjust="spacingAndGlyphs" style="fill:#a8a8a8">Libraries</text>
<text class="b" x="2329" y="134" font-size="15" textLength="36" lengthAdjust="spacingAndGlyphs" style="fill:#a8a8a8">Align</text>
<!-- panel scrollbar -->
<rect x="2482" y="170" width="15" height="863" rx="7" fill="#626262"/>
<use href="#chu" x="2488" y="161"/><use href="#ch" x="2488" y="1044"/>
<!-- dividers -->
<path d="M2132 199.500h350M2132 382.500h350M2132 634.500h350M2132 758.500h350M2132 868.500h350" stroke="#4c4c4c" stroke-width="1.500"/>

<text class="h" x="2146" y="182" textLength="29" lengthAdjust="spacingAndGlyphs">Path</text>
<text class="h" x="2147" y="232" textLength="64" lengthAdjust="spacingAndGlyphs">Transform</text>
<g fill="none" stroke="#d0d0d0" stroke-width="1.500"><rect x="2147" y="266" width="7" height="7"/><rect x="2157" y="266" width="7" height="7"/><rect x="2167" y="266" width="7" height="7"/><rect x="2147" y="275.500" width="7" height="7"/><rect x="2167" y="275.500" width="7" height="7"/><rect x="2147" y="285" width="7" height="7"/><rect x="2157" y="285" width="7" height="7"/><rect x="2167" y="285" width="7" height="7"/></g><rect x="2156" y="275" width="9" height="8" fill="#f0f0f0"/>
<text class="h" x="2189" y="266" font-size="15" textLength="15" lengthAdjust="spacingAndGlyphs">X:</text>
<text class="h" x="2189" y="305" textLength="15" lengthAdjust="spacingAndGlyphs">Y:</text>
<text class="h" x="2316" y="266" textLength="17" lengthAdjust="spacingAndGlyphs">W:</text>
<text class="h" x="2316" y="305" textLength="15" lengthAdjust="spacingAndGlyphs">H:</text>
<g fill="#434343" stroke="#4e4e4e"><rect x="2213" y="246" width="79" height="28" rx="2"/><rect x="2343" y="246" width="80" height="28" rx="2"/><rect x="2213" y="284" width="79" height="28" rx="2"/><rect x="2343" y="284" width="80" height="28" rx="2"/></g>
<text class="v" x="2218" y="264" textLength="66" lengthAdjust="spacingAndGlyphs">10.4698 in</text>
<text class="v" x="2349" y="264" textLength="66" lengthAdjust="spacingAndGlyphs">13.7385 in</text>
<text class="v" x="2218" y="302" textLength="66" lengthAdjust="spacingAndGlyphs">13.9675 in</text>
<text class="v" x="2349" y="302" textLength="66" lengthAdjust="spacingAndGlyphs">13.3089 in</text>
<rect x="2438" y="263" width="35" height="34" rx="3" fill="#2e2e2e"/>
<path d="M2459 277v-4a4.500 4.500 0 0 0-9 0v9a4.500 4.500 0 0 0 9 0" fill="none" stroke="#fff" stroke-width="2.300"/>
<path d="M2452 283v4a4.500 4.500 0 0 0 9 0v-9a4.500 4.500 0 0 0-9 0" fill="none" stroke="#fff" stroke-width="2.300"/>
<path d="M2183 338L2196 327V338z" fill="none" stroke="#c8c8c8" stroke-width="1.500"/><text class="h" x="2201" y="340">:</text>
<rect x="2209" y="322" width="54" height="28" fill="#434343"/><rect x="2264" y="322" width="25" height="28" fill="#4a4a4a"/>
<text class="v" x="2213" y="340" textLength="15" lengthAdjust="spacingAndGlyphs">0°</text><use href="#ch" x="2275" y="338"/>
<path d="M2353 332L2359 338L2353 345zM2373 332L2365 338L2373 345z" fill="#c8c8c8"/><path d="M2363 329v20" class="dot"/>
<path d="M2390 328H2406L2398 335zM2390 348H2406L2398 341z" fill="#c8c8c8"/><path d="M2388 338h20" class="dot"/>
<use href="#dots" x="2452" y="368"/>

<text class="h" x="2146" y="415" textLength="76" lengthAdjust="spacingAndGlyphs">Appearance</text>
<use href="#none" x="2147" y="437"/>
<text class="h" x="2191" y="458" textLength="17" lengthAdjust="spacingAndGlyphs">Fill</text>
<rect x="2147" y="480" width="25" height="25" fill="#000" stroke="#fff"/><rect x="2153.500" y="487" width="12" height="12" fill="#535353" stroke="#ddd"/>
<text x="2190" y="499" font-size="15" textLength="42" lengthAdjust="spacingAndGlyphs" style="fill:#d8d8d8">Stroke</text><path d="M2190 503h42" class="dot"/>
<rect x="2263" y="477" width="25" height="29" fill="#4c4c4c"/><use href="#chu" x="2276" y="486"/><use href="#ch" x="2276" y="499"/>
<rect x="2288" y="477" width="49" height="29" fill="#434343"/><rect x="2338" y="477" width="25" height="29" fill="#4a4a4a"/>
<text class="v" x="2293" y="497" textLength="40" lengthAdjust="spacingAndGlyphs">0.25 p</text><use href="#ch" x="2349" y="492"/>
<rect x="2148" y="523" width="24" height="23" fill="#6a6a6a" stroke="#999"/><path d="M2148 531h8v-8h8v8h8v7h-8v8h-8v-8h-8z" fill="#585858"/>
<text x="2190" y="542" font-size="15" textLength="49" lengthAdjust="spacingAndGlyphs" style="fill:#d8d8d8">Opacity</text><path d="M2190 546h49" class="dot"/>
<rect x="2263" y="521" width="74" height="28" fill="#434343"/><rect x="2338" y="521" width="25" height="28" fill="#4a4a4a"/>
<text class="v" x="2267" y="540" textLength="37" lengthAdjust="spacingAndGlyphs">100%</text>
<path class="chev" d="M2346 529L2351 535L2346 541"/>
<text x="2143" y="592" font-size="19" font-style="italic" style="font-family:'Liberation Serif',serif;fill:#ccc">fx.</text>
<use href="#dots" x="2444" y="620"/>

<text class="h" x="2146" y="666" textLength="32" lengthAdjust="spacingAndGlyphs">Align</text>
<use href="#dash" x="2152" y="696"/><use href="#ch" x="2181" y="708"/>
<use href="#a1" x="2217" y="706"/><use href="#a2" x="2262" y="706"/><use href="#a1" transform="translate(2307 706) scale(-1 1)"/>
<use href="#a4" x="2350" y="706"/><use href="#a5" x="2394" y="706"/><use href="#a4" transform="translate(2438 706) scale(1 -1)"/>
<use href="#dots" x="2452" y="744"/>

<text class="h" x="2147" y="790" textLength="65" lengthAdjust="spacingAndGlyphs">Pathfinder</text>
<use href="#p1" x="2155" y="819"/><use href="#p2" x="2201" y="819"/><use href="#p3" x="2246" y="819"/><use href="#p4" x="2292" y="819"/>
<rect x="2384" y="805" width="92" height="30" fill="#585858"/>
<text x="2407" y="825" font-size="15" textLength="46" lengthAdjust="spacingAndGlyphs" style="fill:#6e6e6e">Expand</text>
<use href="#dots" x="2452" y="851"/>

<text class="h" x="2146" y="908" textLength="87" lengthAdjust="spacingAndGlyphs">Quick Actions</text>
<g fill="none" stroke="#757575" stroke-width="1.500"><rect x="2147" y="928" width="158" height="30" rx="2"/><rect x="2320" y="928" width="158" height="30" rx="2"/><rect x="2147" y="973" width="331" height="31" rx="2"/><rect x="2147" y="1019" width="331" height="30" rx="2"/></g>
<text class="v" x="2190" y="950" textLength="72" lengthAdjust="spacingAndGlyphs">Offset Path</text>
<text class="v" x="2379" y="950" textLength="40" lengthAdjust="spacingAndGlyphs">Group</text>
<text class="v" x="2290" y="995" textLength="48" lengthAdjust="spacingAndGlyphs">Recolor</text>
<text class="v" x="2244" y="1041" textLength="138" lengthAdjust="spacingAndGlyphs">Gen Shape Fill (Beta)</text>

<!-- FLOATING PATHFINDER -->
<rect x="1733" y="737" width="339" height="206" fill="#535353" stroke="#363636" stroke-width="1.500"/>
<rect x="1733" y="737" width="339" height="6" fill="#363636"/>
<rect x="1833" y="743" width="239" height="39" fill="#444"/>
<text class="b" x="1747" y="765" font-size="15" textLength="72" lengthAdjust="spacingAndGlyphs" style="fill:#f0f0f0">Pathfinder</text>
<path d="M2012 757l6 5-6 5M2019 757l6 5-6 5" fill="none" stroke="#ddd" stroke-width="1.500"/>
<rect x="2035.500" y="754" width="1.500" height="16" fill="#bbb"/>
<path d="M2047 758h16M2047 762.500h16M2047 767h16" stroke="#c0c0c0" stroke-width="1.500"/>
<text class="h" x="1741" y="808" textLength="90" lengthAdjust="spacingAndGlyphs">Shape Modes:</text>
<use href="#p1" x="1750" y="830"/><use href="#p2" x="1803" y="830"/><use href="#p3" x="1858" y="830"/><use href="#p4" x="1912" y="830"/>
<rect x="1959" y="826" width="104" height="28" fill="#585858"/>
<text x="1988" y="847" font-size="15" textLength="47" lengthAdjust="spacingAndGlyphs" style="fill:#6e6e6e">Expand</text>
<text class="h" x="1741" y="885" textLength="76" lengthAdjust="spacingAndGlyphs">Pathfinders:</text>
<use href="#p5" x="1753" y="906"/><use href="#p6" x="1808" y="906"/><use href="#p7" x="1862" y="906"/><use href="#p8" x="1917" y="906"/><use href="#p9" x="1972" y="906"/><use href="#p10" x="2028" y="906"/>

<!-- STATUS BAR -->
<rect x="108" y="1032" width="1962" height="23" fill="#505050"/>
<rect x="108" y="1031" width="1962" height="2" fill="#3a3a3a"/>
<rect x="113" y="1034" width="73" height="21" fill="#454545"/><rect x="187" y="1034" width="25" height="21" fill="#4a4a4a"/>
<text x="118" y="1052" font-size="15" textLength="51" lengthAdjust="spacingAndGlyphs" style="fill:#ddd">66.67%</text><use href="#ch" x="199" y="1045"/>
<rect x="220" y="1034" width="72" height="21" fill="#454545"/><rect x="293" y="1034" width="26" height="21" fill="#4a4a4a"/>
<text x="224" y="1052" font-size="15" textLength="14" lengthAdjust="spacingAndGlyphs" style="fill:#ddd">0°</text><use href="#ch" x="306" y="1045"/>
<path d="M337 1039v12M345 1039l-6 6 6 6zM368 1039l-6 6 6 6z" fill="#6e6e6e" stroke="#6e6e6e"/>
<rect x="380" y="1034" width="60" height="21" fill="#454545"/><rect x="441" y="1034" width="26" height="21" fill="#4a4a4a"/>
<text x="387" y="1052" font-size="15" style="fill:#ddd">1</text><use href="#ch" x="454" y="1045"/>
<path d="M483 1039l6 6-6 6zM505 1039l6 6-6 6zM513 1039v12" fill="#6e6e6e" stroke="#6e6e6e"/>
<text x="646" y="1051" font-size="15" textLength="58" lengthAdjust="spacingAndGlyphs" style="fill:#c8c8c8">Selection</text>
<path d="M832 1037l7 7-7 8z" fill="#c8c8c8"/>
<rect x="848" y="1033" width="1" height="22" fill="#444"/>
<path d="M863 1039l-5 6 5 6" fill="none" stroke="#c0c0c0" stroke-width="1.500"/>
<rect x="1445" y="1036" width="34" height="17" rx="8" fill="#666"/>
<path d="M2030 1039l5 6-5 6" fill="none" stroke="#c0c0c0" stroke-width="1.500"/>
<rect x="2060" y="1052" width="440" height="3" fill="#3a3a3a"/>
</svg>
</body></html>
